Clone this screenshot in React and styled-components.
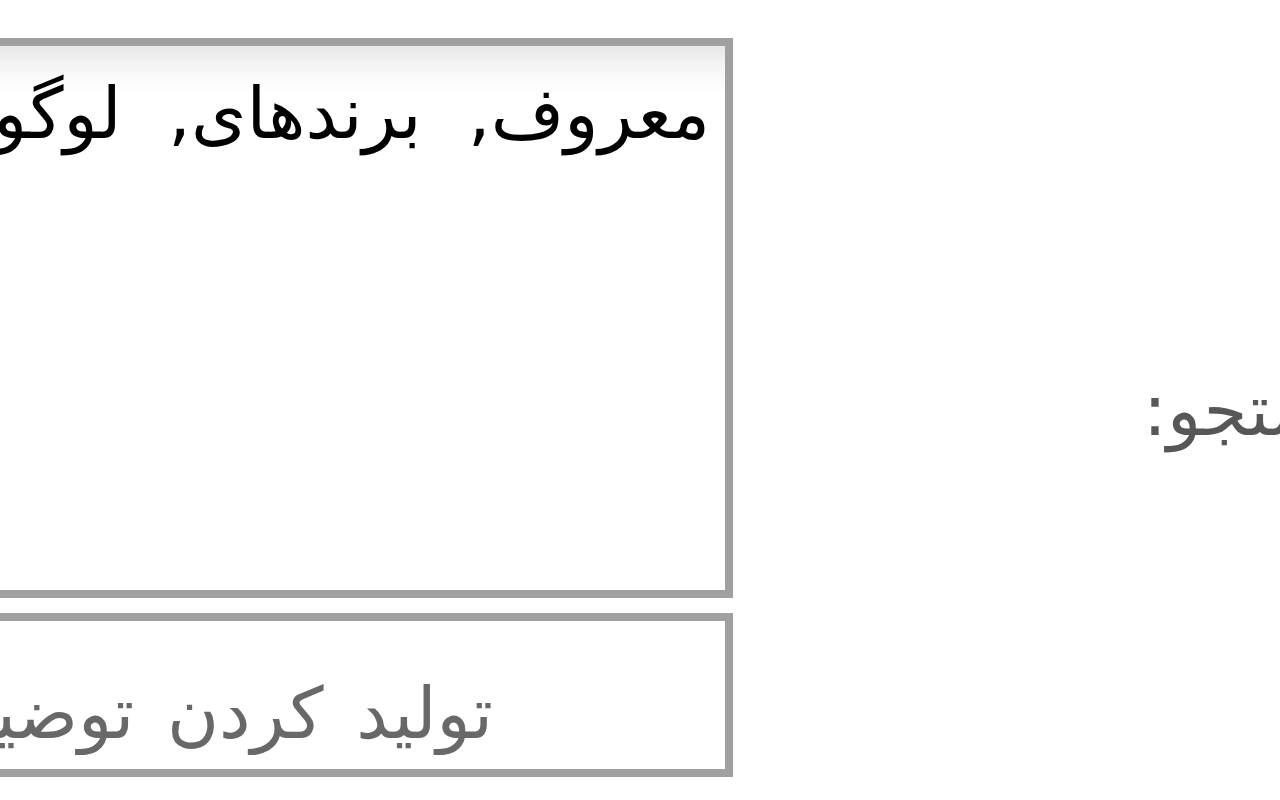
import React from "react";
import styled, { createGlobalStyle } from "styled-components";

const Global = createGlobalStyle`
  html, body { margin: 0; padding: 0; background: #ffffff; }
  body { width: 1280px; height: 800px; overflow: hidden; }
`;

const FONT = `"DejaVu Sans", "Noto Sans", sans-serif`;

const Page = styled.div`
  display: flex;
  flex-direction: row;
  align-items: flex-start;
  width: 1280px;
  height: 800px;
  overflow: hidden;
  background: #ffffff;
`;

const FormColumn = styled.div`
  flex: none;
  display: flex;
  flex-direction: column;
  gap: 15px;
  width: 1033px;
  margin-left: -300px;
  padding-top: 38px;
`;

const Field = styled.textarea`
  box-sizing: border-box;
  display: block;
  width: 100%;
  height: 560px;
  margin: 0;
  border: 8px solid #a0a0a0;
  border-radius: 0;
  background: linear-gradient(#e8e8e8 0px, #f6f6f6 22px, #ffffff 48px);
  color: #000000;
  font-family: ${FONT};
  font-size: 71px;
  line-height: 84px;
  word-spacing: 24px;
  padding: 26px 15px 0 0;
  direction: rtl;
  text-align: right;
  resize: none;
  outline: none;
  overflow: hidden;
`;

const LineInput = styled.input`
  box-sizing: border-box;
  display: block;
  width: 100%;
  height: 164px;
  margin: 0;
  border: 8px solid #a0a0a0;
  border-radius: 0;
  background: #ffffff;
  color: #686868;
  font-family: ${FONT};
  font-size: 71px;
  word-spacing: 10px;
  padding: 36px 232px 0 0;
  direction: rtl;
  text-align: right;
  outline: none;
`;

const Label = styled.label`
  flex: none;
  display: block;
  margin: 375px 0 0 410px;
  color: #575757;
  font-family: ${FONT};
  font-size: 71px;
  line-height: 71px;
  white-space: nowrap;
  direction: rtl;
`;

export default function App() {
  return (
    <>
      <Global />
      <Page>
        <FormColumn>
          <Field readOnly defaultValue="معروف, برندهای, لوگوها" />
          <LineInput readOnly defaultValue="تولید کردن توضیحات محصول" />
        </FormColumn>
        <Label>جستجو:</Label>
      </Page>
    </>
  );
}
